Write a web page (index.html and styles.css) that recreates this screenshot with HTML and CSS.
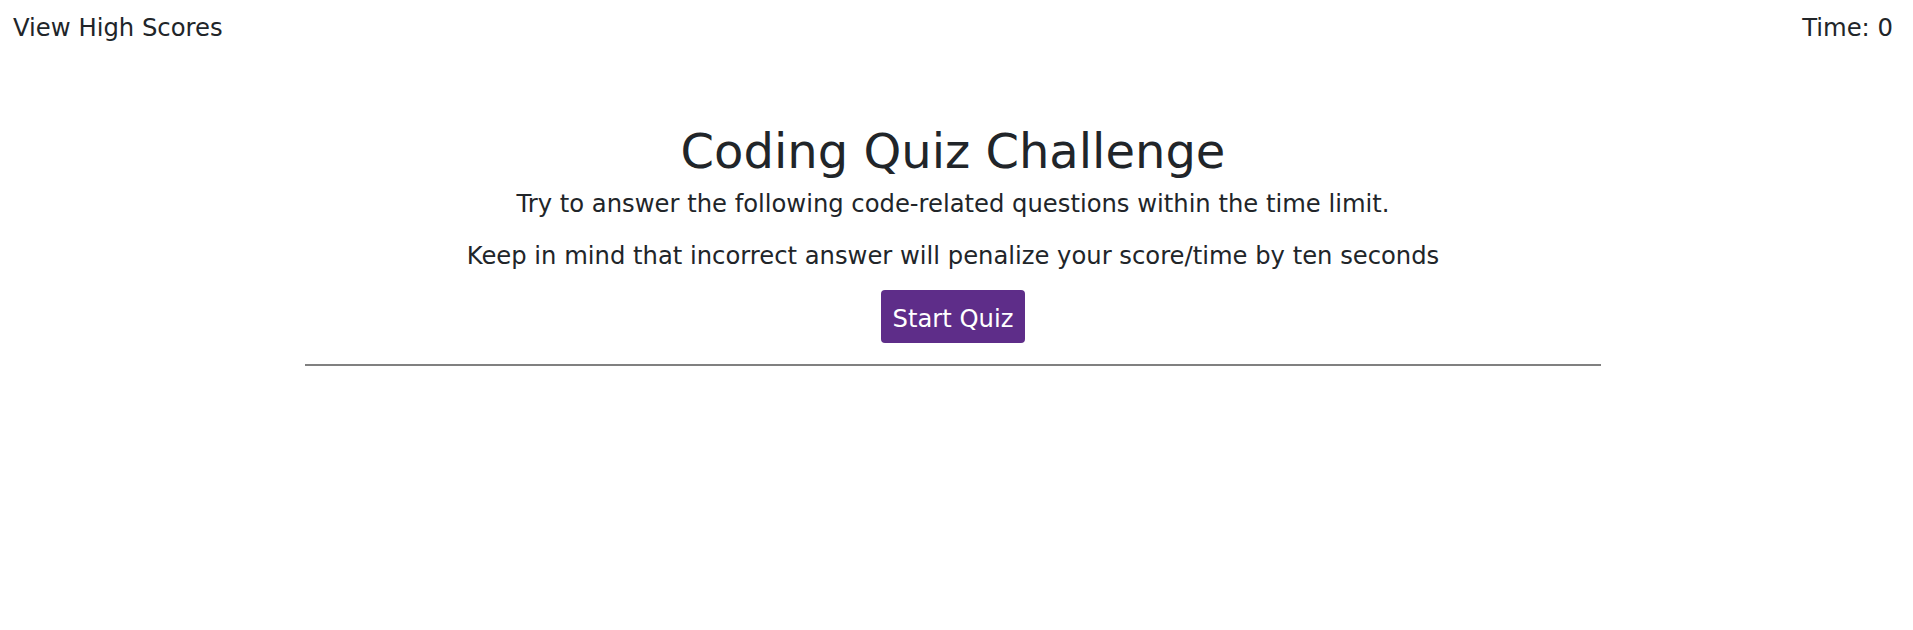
FILE: index.html
```html
<!DOCTYPE html>
<html lang="en">
<head>
<meta charset="utf-8">
<title>Coding Quiz</title>
<link rel="stylesheet" href="styles.css">
</head>
<body>
<header class="topbar">
  <a class="scores-link" href="#">View High Scores</a>
  <div class="timer">Time: <span>0</span></div>
</header>
<main class="wrap">
  <section class="intro">
    <h1 class="title">Coding Quiz Challenge</h1>
    <p class="lead">Try to answer the following code-related questions within the time limit.</p>
    <p class="lead">Keep in mind that incorrect answer will penalize your score/time by ten seconds</p>
    <button class="start-btn" type="button">Start Quiz</button>
  </section>
  <hr class="divider">
</main>
</body>
</html>
```
FILE: styles.css
```css
html, body {
  margin: 0;
  padding: 0;
  background: #ffffff;
}
body {
  font-family: "DejaVu Sans", Verdana, sans-serif;
  color: #212529;
}
.topbar {
  display: flex;
  justify-content: space-between;
  align-items: flex-start;
  padding: 14px 20px 0 13px;
  font-size: 24.3px;
  line-height: 28px;
}
.scores-link {
  color: #212529;
  text-decoration: none;
}
.wrap {
  max-width: 1296px;
  margin: 0 auto;
  padding-right: 7px;
}
.intro {
  display: flex;
  flex-direction: column;
  align-items: center;
  padding-top: 80px;
}
.title {
  margin: 0 0 6px;
  font-size: 48px;
  font-weight: 400;
  line-height: 58px;
}
.lead {
  margin: 0 0 16px;
  font-size: 24.25px;
  line-height: 36px;
}
.start-btn {
  font-family: inherit;
  font-size: 24.25px;
  line-height: 29px;
  color: #ffffff;
  background: #5e2d89;
  border: none;
  border-radius: 4px;
  padding: 14px 12px 10px;
  cursor: pointer;
}
.divider {
  margin: 21px 0 0;
  border: 0;
  border-top: 2px solid #808080;
}
```
